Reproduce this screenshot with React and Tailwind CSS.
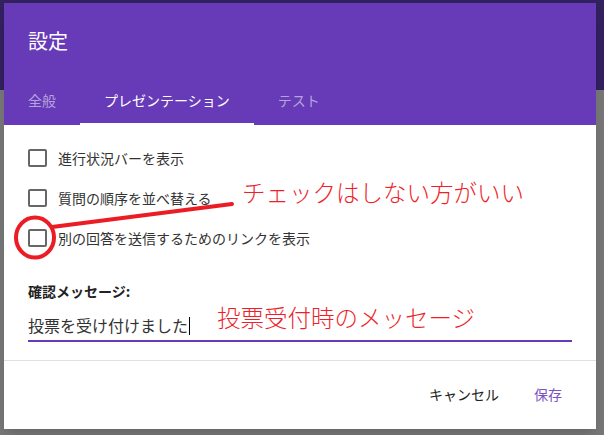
const jp = { fontFamily: '"Noto Sans CJK JP", "Noto Sans", sans-serif' }

const options = [
  '進行状況バーを表示',
  '質問の順序を並べ替える',
  '別の回答を送信するためのリンクを表示',
]

const tabs = [
  { label: '全般', active: false },
  { label: 'プレゼンテーション', active: true },
  { label: 'テスト', active: false },
]

function CheckRow({ label }) {
  return (
    <label className="flex h-10 items-center gap-[11px]">
      <span className="h-[18px] w-[19px] rounded-[2px] border-2 border-[#666]" />
      <span className="text-[14px] leading-5 text-[#333]">{label}</span>
    </label>
  )
}

export default function App() {
  return (
    <div className="relative h-[435px] w-[604px] overflow-hidden bg-[#777]" style={jp}>
      {/* dimmed page behind the dialog */}
      <div className="h-[90px] bg-[#33205f]" />

      {/* dialog */}
      <div className="absolute left-[4px] top-[3px] flex h-[426px] w-[592px] flex-col bg-white shadow-lg">
        <div className="flex h-[122px] flex-col justify-between bg-[#673ab7]">
          <h1 className="pl-6 pt-[24px] text-[20px] leading-7 text-white">設定</h1>
          <div className="flex h-12">
            {tabs.map(t => (
              <div
                key={t.label}
                className={`flex items-center border-b-2 px-6 text-[14px] ${t.active ? 'border-white text-white' : 'border-transparent text-[#b7a3dd]'}`}
              >
                {t.label}
              </div>
            ))}
          </div>
        </div>

        <div className="flex flex-col px-6 pt-[13px]">
          {options.map(o => (
            <CheckRow key={o} label={o} />
          ))}
          <p className="mt-[23px] text-[14px] font-bold leading-5 text-[#222]">確認メッセージ:</p>
          <div className="mt-[14px] flex items-center border-b-2 border-[#673ab7] pb-[4px] text-[16px] leading-[21px] text-[#333]">
            投票を受け付けました
            <span className="ml-px h-[18px] border-l border-black" />
          </div>
        </div>

        <div className="mt-[18px] border-t border-[#e0e0e0]" />

        <div className="flex flex-1 items-center justify-end gap-[19px] pb-px pr-[26px] text-[14px]">
          <button className="px-2 text-[#222]">キャンセル</button>
          <button className="px-2 text-[#7b52c4]">保存</button>
        </div>
      </div>

      {/* red hand annotations */}
      <svg className="absolute left-0 top-0" width="604" height="435">
        <ellipse cx="35" cy="237.5" rx="19" ry="20" fill="none" stroke="#ec1c24" strokeWidth="4" />
        <path d="M52 227 L232 204" stroke="#ec1c24" strokeWidth="4" strokeLinecap="round" />
      </svg>
      <p className="absolute left-[242px] top-[178px] text-[23.5px] font-light leading-7 text-[#ee1f2b]">チェックはしない方がいい</p>
      <p className="absolute left-[217px] top-[303px] text-[23.5px] font-light leading-7 text-[#ee1f2b]">投票受付時のメッセージ</p>
    </div>
  )
}
